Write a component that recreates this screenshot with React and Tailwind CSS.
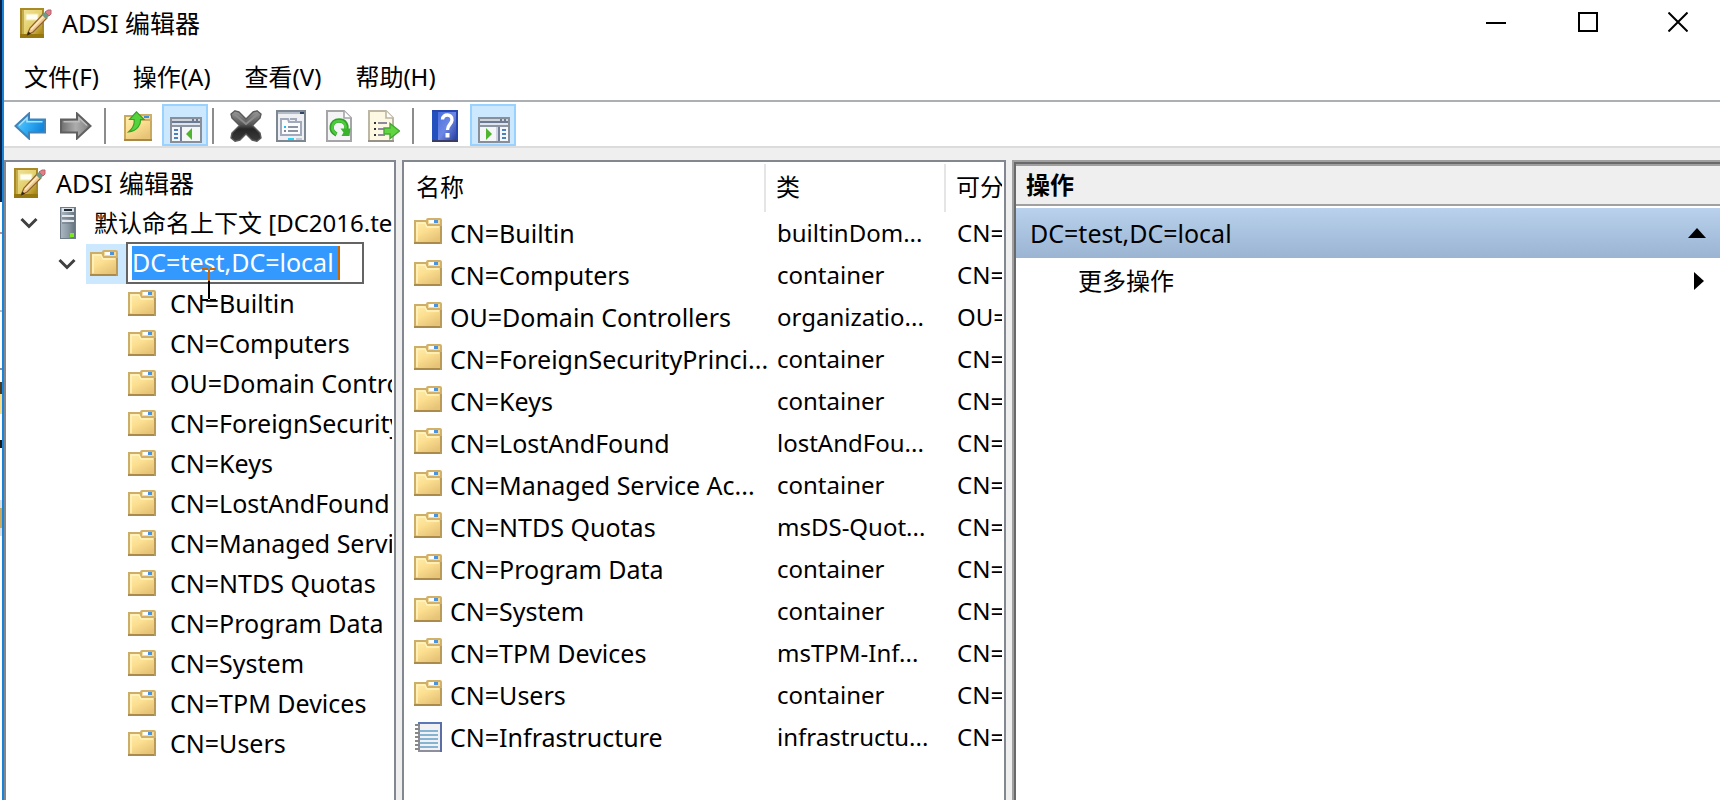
const FONT = "font-['Noto_Sans','Noto_Sans_CJK_SC',sans-serif]";

const TREE_CHILDREN = [
  "CN=Builtin",
  "CN=Computers",
  "OU=Domain Controllers",
  "CN=ForeignSecurityPrincipals",
  "CN=Keys",
  "CN=LostAndFound",
  "CN=Managed Service Accounts",
  "CN=NTDS Quotas",
  "CN=Program Data",
  "CN=System",
  "CN=TPM Devices",
  "CN=Users",
];

const ROWS = [
  ["CN=Builtin", "builtinDom...", "CN="],
  ["CN=Computers", "container", "CN="],
  ["OU=Domain Controllers", "organizatio...", "OU="],
  ["CN=ForeignSecurityPrinci...", "container", "CN="],
  ["CN=Keys", "container", "CN="],
  ["CN=LostAndFound", "lostAndFou...", "CN="],
  ["CN=Managed Service Ac...", "container", "CN="],
  ["CN=NTDS Quotas", "msDS-Quot...", "CN="],
  ["CN=Program Data", "container", "CN="],
  ["CN=System", "container", "CN="],
  ["CN=TPM Devices", "msTPM-Inf...", "CN="],
  ["CN=Users", "container", "CN="],
  ["CN=Infrastructure", "infrastructu...", "CN="],
];

function Defs() {
  return (
    <svg className="absolute" width="0" height="0" aria-hidden="true">
      <defs>
        <linearGradient id="folder" x1="0" y1="0" x2="0.6" y2="1">
          <stop offset="0" stopColor="#fdeeae" />
          <stop offset="0.5" stopColor="#fcdf90" />
          <stop offset="1" stopColor="#e6c377" />
        </linearGradient>
        <linearGradient id="book" x1="0" y1="0" x2="1" y2="1">
          <stop offset="0" stopColor="#efe29a" />
          <stop offset="0.55" stopColor="#e3d06c" />
          <stop offset="1" stopColor="#a88410" />
        </linearGradient>
        <linearGradient id="blueArrow" x1="0" y1="0" x2="1" y2="0.4">
          <stop offset="0" stopColor="#6fd0fb" />
          <stop offset="0.5" stopColor="#33aef5" />
          <stop offset="1" stopColor="#1186dd" />
        </linearGradient>
        <linearGradient id="grayArrow" x1="0" y1="0" x2="1" y2="0">
          <stop offset="0" stopColor="#6e6e6e" />
          <stop offset="0.5" stopColor="#adadad" />
          <stop offset="1" stopColor="#7c7c7c" />
        </linearGradient>
        <linearGradient id="cross" x1="0" y1="0" x2="0" y2="1">
          <stop offset="0" stopColor="#9a9a9a" />
          <stop offset="0.45" stopColor="#555" />
          <stop offset="0.6" stopColor="#262626" />
          <stop offset="1" stopColor="#3c3c3c" />
        </linearGradient>
        <linearGradient id="server" x1="0" y1="0" x2="1" y2="0">
          <stop offset="0" stopColor="#a9b6bf" />
          <stop offset="0.5" stopColor="#8c9ba6" />
          <stop offset="1" stopColor="#66737e" />
        </linearGradient>
        <linearGradient id="help" x1="0" y1="0" x2="1" y2="1">
          <stop offset="0" stopColor="#4a70dc" />
          <stop offset="0.5" stopColor="#6d88e6" />
          <stop offset="1" stopColor="#2b3f9c" />
        </linearGradient>
      </defs>
    </svg>
  );
}

function BookIcon() {
  return (
    <svg width="32" height="30" viewBox="0 0 32 30" className="shrink-0" aria-hidden="true">
      <rect x="0" y="0" width="24" height="30" fill="#a98a26" />
      <rect x="2" y="2" width="20" height="24" fill="url(#book)" />
      <rect x="2" y="2" width="2" height="24" fill="#c4ac4a" />
      <rect x="0" y="26" width="24" height="4" fill="#97780f" />
      <rect x="6" y="6" width="12" height="6" fill="#fffef0" stroke="#f1e7a8" />
      <path d="M7 27 L10 20 L23 6 L27 10 L13 24 Z" fill="#f4c888" stroke="#8a6230" strokeWidth="1.2" />
      <path d="M11 21.5 L24 8" stroke="#fdebc8" strokeWidth="1.6" />
      <path d="M7 27.4 L8.4 23.4 L11 25.8 Z" fill="#2f2519" />
      <path d="M22 7 L25 4 L29 8 L26 11 Z" fill="#6f9a86" />
      <path d="M25 4 L28 2 H31 V6 L29 8 Z" fill="#df7f87" stroke="#b9626c" />
    </svg>
  );
}

function FolderIcon() {
  return (
    <svg width="28" height="26" viewBox="0 0 28 26" className="shrink-0" aria-hidden="true">
      <path d="M1 3 H12 L14 7 H27 V25 H1 Z" fill="url(#folder)" stroke="#cdae68" strokeWidth="2" />
      <rect x="13" y="1" width="14" height="6" rx="1" fill="#f3dca0" stroke="#d3b068" strokeWidth="2" />
      <rect x="15" y="2" width="5" height="3" fill="#fff" />
      <rect x="20" y="2" width="4" height="3" fill="#4a93dd" />
      <path d="M3 23 V5 H11 L13 9 H25" fill="none" stroke="#fff3c0" strokeWidth="1.5" />
      <path d="M0 25 H28" stroke="#ab8b4b" strokeWidth="2" />
      <path d="M27 8 V26" stroke="#b99a58" strokeWidth="2" />
    </svg>
  );
}

function NotebookIcon() {
  return (
    <svg width="28" height="30" viewBox="0 0 28 30" className="shrink-0" aria-hidden="true">
      <rect x="5" y="1" width="22" height="28" fill="#f1f1f4" stroke="#8d8f9d" strokeWidth="2" />
      <path d="M4 1 H28" stroke="#5878b8" strokeWidth="2" />
      <path d="M27 0 V30" stroke="#5b6ea4" strokeWidth="2" />
      <path d="M6 9 H24 M6 13 H24 M6 17 H24 M6 21 H24 M6 25 H24" stroke="#85b4d3" strokeWidth="2" />
      <path d="M1 3 H6 M1 7 H6 M1 11 H6 M1 15 H6 M1 19 H6 M1 23 H6 M1 27 H6" stroke="#888" strokeWidth="2" />
    </svg>
  );
}

function ServerIcon() {
  return (
    <svg width="16" height="32" viewBox="0 0 16 32" className="shrink-0" aria-hidden="true">
      <rect width="16" height="32" fill="#6f7d88" />
      <rect x="1" y="1" width="14" height="30" fill="url(#server)" />
      <rect x="2" y="1" width="12" height="4" fill="#dbe2e7" />
      <path d="M4 3 H12" stroke="#1f2a33" strokeWidth="2" />
      <path d="M2 9 H14 M2 14 H14" stroke="#e4eaee" strokeWidth="2" />
      <path d="M2 11 H14 M2 16 H14" stroke="#6a7782" strokeWidth="1" />
      <rect x="10" y="26" width="4" height="4" fill="#7bea1c" />
    </svg>
  );
}

function Chevron() {
  return (
    <svg width="18" height="12" viewBox="0 0 18 12" className="shrink-0" aria-hidden="true">
      <path d="M1.5 2 L9 9.5 L16.5 2" fill="none" stroke="#404040" strokeWidth="3" />
    </svg>
  );
}

function BackIcon() {
  return (
    <svg width="32" height="28" viewBox="0 0 32 28" aria-hidden="true">
      <path d="M1.5 14 L15 1.5 V7.5 H31 V20.5 H15 V26.5 Z" fill="url(#blueArrow)" stroke="#3f83b8" strokeWidth="2" />
      <path d="M5 13.5 L13 6 V9.8 H28.5" fill="none" stroke="#a9e2fc" strokeWidth="1.5" />
    </svg>
  );
}

function ForwardIcon() {
  return (
    <svg width="32" height="28" viewBox="0 0 32 28" aria-hidden="true">
      <path d="M30.5 14 L17 1.5 V7.5 H1 V20.5 H17 V26.5 Z" fill="url(#grayArrow)" stroke="#606060" strokeWidth="2" />
      <path d="M27 13.5 L19 6 V9.8 H3.5" fill="none" stroke="#bdbdbd" strokeWidth="1.5" />
    </svg>
  );
}

function FolderUpIcon() {
  return (
    <svg width="28" height="30" viewBox="0 0 28 30" aria-hidden="true">
      <path d="M1 5 H12 V9 H27 V29 H1 Z" fill="url(#folder)" stroke="#c9a95f" strokeWidth="2" />
      <rect x="15" y="4" width="12" height="5" fill="#f1dba0" stroke="#d0ae64" strokeWidth="2" />
      <rect x="20" y="5" width="5" height="2" fill="#3f8ee0" />
      <path d="M0 29 H28" stroke="#a98747" strokeWidth="2" />
      <path
        d="M12.5 0.8 L20 8.5 H16.5 C17 14 13 20 4.5 21 C9 17 11 13 10 8.5 H5.5 Z"
        fill="#54d33c"
        stroke="#36a324"
        strokeWidth="1.2"
      />
    </svg>
  );
}

function PaneIcon({ side }) {
  return (
    <svg width="32" height="26" viewBox="0 0 32 26" aria-hidden="true">
      <rect x="1" y="1" width="30" height="24" fill="#f5f6f8" stroke="#888f98" strokeWidth="2" />
      <rect x="2" y="2" width="28" height="2" fill="#cdd4de" />
      <rect x="2" y="4" width="28" height="2" fill="#6d7a94" />
      <rect x="22" y="2" width="2" height="2" fill="#6d7a94" />
      <rect x="26" y="2" width="2" height="2" fill="#6d7a94" />
      <rect x="2" y="6" width="28" height="2" fill="#dfe3ea" />
      <rect x="2" y="8" width="28" height="2" fill="#8b95a6" />
      {side === "left" ? (
        <>
          <path d="M11 10 V24" stroke="#74809a" strokeWidth="2" />
          <path d="M4 13 H8 M4 17 H8 M4 21 H8" stroke="#4a7fc0" strokeWidth="2" />
          <path d="M16 17 L22 11 V23 Z" fill="#4fb52e" />
        </>
      ) : (
        <>
          <rect x="18" y="10" width="2" height="14" fill="#cfd5de" />
          <path d="M21 10 V24" stroke="#74809a" strokeWidth="2" />
          <path d="M24 13 H28 M24 17 H28 M24 21 H28" stroke="#4a7fc0" strokeWidth="2" />
          <path d="M14 17 L8 11 V23 Z" fill="#4fb52e" />
        </>
      )}
    </svg>
  );
}

function DeleteIcon() {
  return (
    <svg width="32" height="32" viewBox="0 0 32 32" aria-hidden="true">
      <path
        d="M1 4 L5 0.8 L9 2 L16 9 L23 2 L27 0.8 L31 4 L30 8 L22.5 15.5 L30 23 L31 28 L27 31.2 L22 30 L16 24 L10 30 L5 31.2 L1 28 L2 23 L9.5 15.5 L2 8 Z"
        fill="url(#cross)"
        stroke="#5a5a5a"
        strokeWidth="1.4"
        strokeLinejoin="round"
      />
      <path d="M4 4 L16 14 L28 4" fill="none" stroke="#8c8c8c" strokeWidth="2" />
    </svg>
  );
}

function PropertiesIcon() {
  return (
    <svg width="30" height="32" viewBox="0 0 30 32" aria-hidden="true">
      <rect x="1" y="1" width="28" height="30" fill="#eef0f3" stroke="#7d8791" strokeWidth="2" />
      <path d="M2 3 H24" stroke="#b4bcc8" strokeWidth="2" />
      <rect x="24" y="2" width="4" height="2" fill="#2f4562" />
      <path d="M5 9 H12 L13 12 H25 V25 H5 Z" fill="#fafbfd" stroke="#a2a9ba" strokeWidth="2" />
      <path d="M14 9 H20 V12" fill="none" stroke="#a2a9ba" strokeWidth="2" />
      <rect x="8" y="16" width="2" height="2" fill="#22b8f0" />
      <rect x="8" y="20" width="2" height="2" fill="#808896" />
      <path d="M12 17 H22 M12 21 H22" stroke="#8c94a3" strokeWidth="2" />
      <rect x="12" y="28" width="6" height="2" fill="#27d3fb" />
      <rect x="20" y="28" width="6" height="2" fill="#c3c9d0" />
    </svg>
  );
}

function RefreshIcon() {
  return (
    <svg width="26" height="32" viewBox="0 0 26 32" aria-hidden="true">
      <path d="M1 1 H18 L25 8 V31 H1 Z" fill="#f4f4f6" stroke="#a5a5a8" strokeWidth="2" />
      <path d="M18 1 V8 H25" fill="#fff" stroke="#a5a5a8" strokeWidth="1.6" />
      <path d="M10.5 24.5 C3 21 4.5 10.5 13 10.5 C19.5 10.5 21.5 15.5 20 20" fill="none" stroke="#2f9f26" strokeWidth="4.4" />
      <path d="M10.5 24 C4 20.5 5.5 11 13 11 C18.5 11 20.5 15.5 19.5 20" fill="none" stroke="#4ccb3c" strokeWidth="2.6" />
      <path d="M14.5 18.5 H24.5 L23.5 26 H15.5 L17.5 22.5 Z" fill="#39b32d" />
    </svg>
  );
}

function ExportIcon() {
  return (
    <svg width="32" height="32" viewBox="0 0 32 32" aria-hidden="true">
      <path d="M1 1 H18 L25 8 V31 H1 Z" fill="#fdf8e2" stroke="#bcb7a4" strokeWidth="2" />
      <path d="M0 31 H26" stroke="#96928a" strokeWidth="2" />
      <path d="M18 1 V8 H25" fill="#fff" stroke="#bcb7a4" strokeWidth="1.6" />
      <path d="M6 13 H8 M6 19 H8 M6 25 H8" stroke="#333" strokeWidth="2" />
      <path d="M10 13 H19 M10 19 H16 M10 25 H17" stroke="#8d8aa0" strokeWidth="2" />
      <path d="M16 18 H22 V13.5 L31.5 21 L22 28.5 V24 H16 Z" fill="#5fd63f" stroke="#46a834" strokeWidth="1.4" />
    </svg>
  );
}

function HelpIcon() {
  return (
    <svg width="26" height="32" viewBox="0 0 26 32" aria-hidden="true">
      <rect width="26" height="32" fill="#2747ae" />
      <rect x="6" y="2" width="18" height="28" fill="url(#help)" />
      <rect x="0" y="2" width="6" height="28" fill="#2450bd" />
      <rect x="0" y="30" width="26" height="2" fill="#3b3d63" />
      <path
        d="M10.5 9.5 C10.5 3.5 20.5 3.5 20 10 C19.7 14 15.5 14.5 15.5 20"
        fill="none"
        stroke="#fff"
        strokeWidth="3.4"
      />
      <rect x="13.5" y="23" width="4" height="4.5" fill="#fff" />
    </svg>
  );
}

function Separator() {
  return <div className="mt-1 h-9 w-0.5 shrink-0 bg-[#8c8c8c]" />;
}

const TOOL = "flex h-[42px] shrink-0 items-center justify-center pt-0.5";
const ACTIVE =
  "flex h-[42px] w-[46px] shrink-0 items-end justify-center border-2 border-[#99d1ff] bg-[#cce8ff] pb-px pl-0.5";

export default function App() {
  return (
    <div className={`${FONT} flex min-h-screen overflow-hidden bg-white text-[24px] leading-none text-black`}>
      <Defs />
      <div className="flex w-0.5 shrink-0 flex-col bg-white" aria-hidden="true">
        <div className="h-[202px] bg-[#0b2347]" />
        <div className="mt-[30px] h-0.5 bg-[#b98f88]" />
        <div className="mt-[76px] h-0.5 bg-[#b8bcc4]" />
        <div className="mt-[56px] h-0.5 bg-[#8a8f98]" />
        <div className="mt-3 h-3 bg-[#4a3a20]" />
        <div className="h-5 bg-[#f9dc8a]" />
        <div className="mt-[26px] h-2 bg-[#1a1a1a]" />
        <div className="mt-[52px] h-2 bg-[#dedede]" />
        <div className="h-5 bg-[#c9a860]" />
        <div className="h-2 bg-[#dedede]" />
      </div>
      <div className="flex min-w-0 flex-1 flex-col border-l-2 border-[#1883d7]">
        <header className="flex h-[46px] items-center">
          <div className="flex flex-1 items-center gap-2.5 pl-4">
            <BookIcon />
            <h1 className="text-[25px]">ADSI 编辑器</h1>
          </div>
          <div className="flex gap-1 pb-0.5">
            <button aria-label="最小化" className="flex h-11 w-[88px] items-center justify-center">
              <svg width="20" height="20" viewBox="0 0 20 20"><path d="M0 11 H20" stroke="#000" strokeWidth="2" /></svg>
            </button>
            <button aria-label="最大化" className="flex h-11 w-[88px] items-center justify-center">
              <svg width="20" height="20" viewBox="0 0 20 20"><rect x="1" y="1" width="18" height="18" fill="none" stroke="#000" strokeWidth="2" /></svg>
            </button>
            <button aria-label="关闭" className="flex h-11 w-[84px] items-center justify-center">
              <svg width="20" height="20" viewBox="0 0 20 20"><path d="M0.5 0.5 L19.5 19.5 M19.5 0.5 L0.5 19.5" stroke="#000" strokeWidth="2" /></svg>
            </button>
          </div>
        </header>

        <nav className="flex h-[54px] items-center gap-[34px] pl-5 pt-2">
          <button>文件(F)</button>
          <button>操作(A)</button>
          <button>查看(V)</button>
          <button>帮助(H)</button>
        </nav>

        <div className="flex h-12 items-start border-b-2 border-t-2 border-b-[#dcdcdc] border-t-[#abb0b4] pl-2.5 pt-0.5">
          <button aria-label="后退" className={`${TOOL} w-8`}><BackIcon /></button>
          <button aria-label="前进" className={`${TOOL} ml-3.5 mr-3 w-8`}><ForwardIcon /></button>
          <Separator />
          <button aria-label="上一级" className={`${TOOL} ml-[18px] mr-2.5 w-7`}><FolderUpIcon /></button>
          <button aria-label="显示/隐藏控制台树" aria-pressed="true" className={`${ACTIVE} mr-1`}><PaneIcon side="left" /></button>
          <Separator />
          <button aria-label="删除" className={`${TOOL} ml-4 w-8`}><DeleteIcon /></button>
          <button aria-label="属性" className={`${TOOL} ml-3.5 w-[30px]`}><PropertiesIcon /></button>
          <button aria-label="刷新" className={`${TOOL} ml-5 w-[26px]`}><RefreshIcon /></button>
          <button aria-label="导出列表" className={`${TOOL} ml-4 mr-3 w-8`}><ExportIcon /></button>
          <Separator />
          <button aria-label="帮助" className={`${TOOL} ml-[18px] mr-3 w-[26px]`}><HelpIcon /></button>
          <button aria-label="显示/隐藏操作窗格" aria-pressed="true" className={ACTIVE}><PaneIcon side="right" /></button>
        </div>

        <main className="flex flex-1 gap-1.5 bg-[#efefef] pt-3">
          <nav aria-label="控制台树" className="w-[392px] shrink-0 overflow-hidden border-2 border-b-0 border-[#828790] bg-white pr-0.5 pt-0.5">
            <div className="overflow-hidden whitespace-nowrap text-[25px]">
              <div className="flex h-10 items-center gap-2.5 pb-0.5 pl-2">
                <BookIcon />
                <span>ADSI 编辑器</span>
              </div>
              <div className="flex h-10 items-center pb-0.5 pl-3.5">
                <button aria-label="折叠"><Chevron /></button>
                <span className="ml-[22px] mr-[18px] flex"><ServerIcon /></span>
                <span className="text-[24px]">默认命名上下文 [DC2016.test.local]</span>
              </div>
              <div className="flex h-10 items-center pl-[52px]">
                <button aria-label="折叠"><Chevron /></button>
                <span className="ml-2.5 flex h-10 w-10 shrink-0 items-center bg-[#cce8ff] pb-0.5 pl-1">
                  <FolderIcon />
                </span>
                <label className="mb-0.5 flex h-[42px] w-[238px] items-center border-2 border-[#646464] bg-white pl-1">
                  <span className="flex h-[34px] items-center border-r-2 border-[#cc6600] bg-[#3399ff]">
                    <input
                      aria-label="名称"
                      defaultValue="DC=test,DC=local"
                      className="h-[34px] w-[206px] bg-transparent pb-0.5 text-white outline-none"
                    />
                  </span>
                </label>
              </div>
              <ul className="relative">
                <li aria-hidden="true" className="absolute -top-4 left-[196px] z-10">
                  <svg width="16" height="34" viewBox="0 0 16 34">
                    <path d="M0 1 H6 M8 1 H14 M7 2 V13" stroke="#cc6600" strokeWidth="2" />
                    <path d="M7 13 V31 M0 32 H6 M8 32 H14" stroke="#000" strokeWidth="2" />
                  </svg>
                </li>
                {TREE_CHILDREN.map((name) => (
                  <li key={name} className="flex h-10 items-center gap-3.5 pb-0.5 pl-[122px]">
                    <FolderIcon />
                    <span>{name}</span>
                  </li>
                ))}
              </ul>
            </div>
          </nav>

          <section aria-label="对象列表" className="w-[604px] shrink-0 overflow-hidden border-2 border-b-0 border-[#828790] bg-white pr-0.5 pt-0.5">
            <table className="w-full table-fixed border-collapse whitespace-nowrap text-left">
              <thead>
                <tr className="h-12">
                  <th className="w-[361px] border-r-2 border-[#e5e5e5] p-0 pb-0.5 pl-3 font-normal">名称</th>
                  <th className="w-[180px] border-r-2 border-[#e5e5e5] p-0 pb-0.5 pl-2.5 font-normal">类</th>
                  <th className="overflow-hidden p-0 pb-0.5 pl-2.5 font-normal">可分</th>
                </tr>
              </thead>
              <tbody>
                {ROWS.map(([name, cls, dn]) => (
                  <tr key={name} className="h-[42px]">
                    <td className="p-0 pl-2.5 text-[25px]">
                      <span className="flex h-[30px] items-center gap-2">
                        {name === "CN=Infrastructure" ? (
                          <NotebookIcon />
                        ) : (
                          <span className="flex pb-1"><FolderIcon /></span>
                        )}
                        <span>{name}</span>
                      </span>
                    </td>
                    <td className="p-0 pl-3">{cls}</td>
                    <td className="overflow-hidden p-0 pl-3">{dn}</td>
                  </tr>
                ))}
              </tbody>
            </table>
          </section>

          <aside className="min-w-0 flex-1 border-l-2 border-t-2 border-[#a0a0a0]">
            <div className="flex h-full flex-col border-l-2 border-t-2 border-[#696969] bg-white">
              <h2 className="flex h-[42px] items-center border-b-2 border-t-2 border-[#a0a0a0] bg-[#efefef] pl-2.5 font-bold">
                操作
              </h2>
              <button className="mt-0.5 flex h-[50px] items-center justify-between bg-linear-to-b from-[#b9d1ec] to-[#9ab4d2] px-3.5 text-[25px]">
                <span>DC=test,DC=local</span>
                <svg width="18" height="10" viewBox="0 0 18 10" aria-hidden="true"><path d="M0 10 L9 0 L18 10 Z" /></svg>
              </button>
              <button className="flex h-[46px] items-center justify-between pl-[62px] pr-4">
                <span>更多操作</span>
                <svg width="10" height="18" viewBox="0 0 10 18" aria-hidden="true"><path d="M0 0 L10 9 L0 18 Z" /></svg>
              </button>
            </div>
          </aside>
        </main>
      </div>
    </div>
  );
}
